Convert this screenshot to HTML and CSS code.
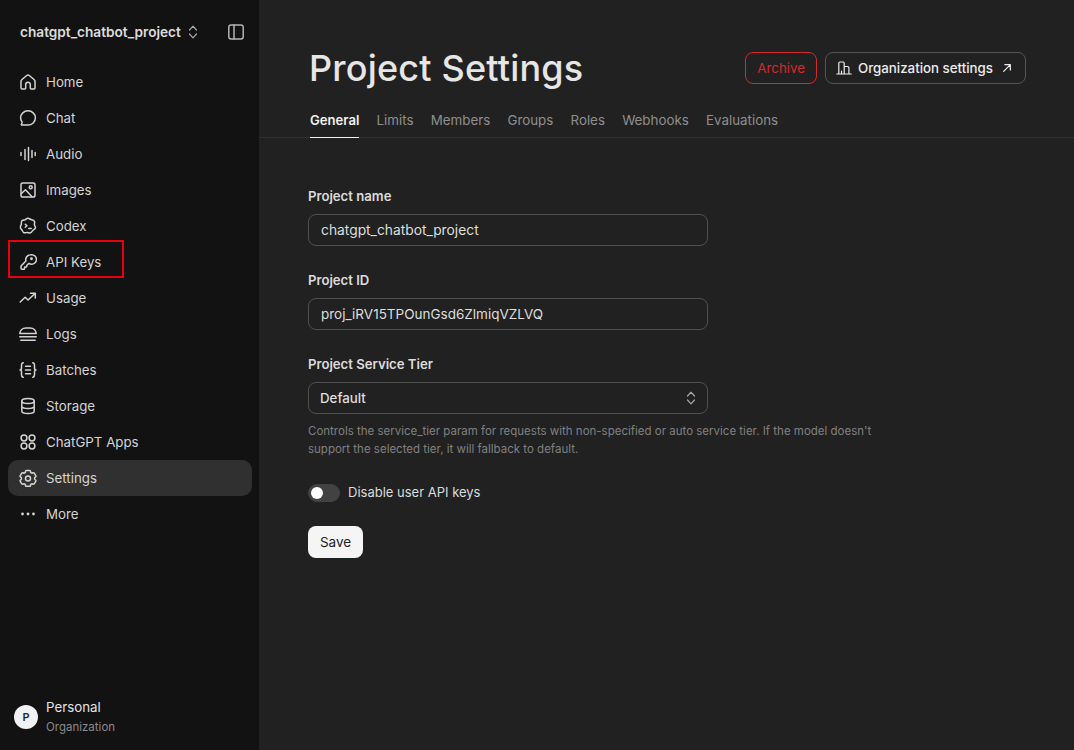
FILE: index.html
```html
<!DOCTYPE html>
<html>
<head>
	<title>Project Settings</title>
	<link rel="stylesheet" href="styles.css">
</head>
<body>
	<div class="app">
		<aside class="sidebar">
			<div class="project-row">
				<span class="project-name">chatgpt_chatbot_project</span>
				<svg class="chevrons" viewBox="0 0 10 16"><path d="M1.5 6 5 2.2 8.500 6M1.500 10 5 13.800 8.500 10"/></svg>
				<svg class="panel-icon" viewBox="0 0 18 18"><rect x="1.800" y="2" width="14.400" height="14" rx="2.200"/><path d="M7 2v14"/></svg>
			</div>
			<nav class="nav">
				<a class="nav-item"><svg viewBox="0 0 18 18"><path d="M3 16c-.6 0-1-.4-1-1V8.200c0-.6.2-1 .7-1.400l5-4.300c.8-.6 1.800-.6 2.600 0l5 4.300c.5.400.7.800.7 1.400V15c0 .6-.4 1-1 1h-2.800c-.5 0-.9-.4-.9-.9v-3.600a2.300 2.300 0 0 0-4.600 0v3.600c0 .5-.4.900-.9.900z"/></svg><span>Home</span></a>
				<a class="nav-item"><svg viewBox="0 0 18 18"><path d="M9 1.800C5 1.800 1.600 4.900 1.600 8.800c0 1.500.5 2.800 1.300 3.900.3.400.3.800.1 1.300l-.7 1.500c-.1.300.1.600.4.600H9c4 0 7.400-3.100 7.400-7.300C16.400 4.900 13 1.800 9 1.800z"/></svg><span>Chat</span></a>
				<a class="nav-item"><svg viewBox="0 0 18 18"><path d="M2 7.500v3M6 4.500v10M9.500 2.500v13M13 5.500v7M16.200 7.500v3"/></svg><span>Audio</span></a>
				<a class="nav-item"><svg viewBox="0 0 18 18"><rect x="2" y="2" width="14" height="14" rx="1.800"/><circle cx="11.700" cy="6.300" r="1.500"/><path d="M2.400 12.500 6.500 8.700l6.500 7"/></svg><span>Images</span></a>
				<a class="nav-item"><svg viewBox="0 0 18 18"><path d="M9 1.300c1.300 0 2 1 3.100 1.300 1.400.3 2.900.4 3.400 1.800.4 1.100-.2 2.100-.1 3.200.2 1.100 1.300 1.800 1 3.200-.3 1.300-1.600 1.600-2.400 2.400-.8.800-1.300 2.100-2.600 2.600-1.100.4-2-.4-3.100-.4-1.200 0-2.300.8-3.400.3-1.200-.5-1.300-1.900-2-2.800C2.100 12.200 1 11.600 1.400 9.700c.2-1.100 1-1.700 1-2.900 0-1.200-.3-2.200.5-3.100.9-.9 2.200-.6 3.300-1C7.200 2.100 7.800 1.300 9 1.300z"/><path d="m6.300 7.300 1.600 1.500-1.600 1.500M9.800 11.500h2.400"/></svg><span>Codex</span></a>
				<a class="nav-item marked"><svg viewBox="0 0 18 18"><path d="M11.500 1.800a4.800 4.800 0 0 0-4.600 6.100L2.500 12.400c-.3.300-.5.600-.5 1v1.800c0 .6.400 1 1 1h1.800c.5 0 .8-.4.800-.8v-1.300h1.300c.5 0 .9-.4.900-.9v-1l2.100-1.800A4.800 4.800 0 1 0 11.500 1.800z"/><circle cx="12.500" cy="5.700" r=".7"/></svg><span>API Keys</span></a>
				<a class="nav-item"><svg viewBox="0 0 18 18"><path d="m1.200 13 4.900-4.700 3 2.700L16 4.500M11.500 4.200h4.800V9"/></svg><span>Usage</span></a>
				<a class="nav-item"><svg viewBox="0 0 18 18"><path d="M.8 8.600C1 5.300 3.500 3 7 3h4c3.500 0 6 2.300 6.200 5.600zM.8 11.800h16.400M1.800 15.200h14.400"/></svg><span>Logs</span></a>
				<a class="nav-item"><svg viewBox="0 0 18 18"><path d="M4.300 1.800C2.500 1.800 2.500 3.200 2.500 4.800v2.300c0 1.200-.5 1.900-1.500 1.900 1 0 1.500.7 1.500 1.900v2.300c0 1.600 0 3 1.800 3M13.700 1.800c1.800 0 1.800 1.400 1.800 3v2.300c0 1.200.5 1.900 1.500 1.900-1 0-1.500.7-1.500 1.900v2.300c0 1.600 0 3-1.800 3M6.500 5.300h5M6.500 9h5M6.500 12.700h5"/></svg><span>Batches</span></a>
				<a class="nav-item"><svg viewBox="0 0 18 18"><ellipse cx="9" cy="4" rx="6.200" ry="2.500"/><path d="M2.800 4v10c0 1.400 2.800 2.500 6.200 2.500s6.200-1.100 6.200-2.500V4M2.800 9c0 1.400 2.800 2.500 6.200 2.500s6.200-1.100 6.200-2.500"/></svg><span>Storage</span></a>
				<a class="nav-item"><svg viewBox="0 0 18 18"><circle cx="5" cy="5" r="2.900"/><circle cx="13" cy="5" r="2.900"/><circle cx="5" cy="13" r="2.900"/><circle cx="13" cy="13" r="2.900"/></svg><span>ChatGPT Apps</span></a>
				<a class="nav-item active"><svg viewBox="0 0 18 18"><path d="M7.500 1.600h3c.5 0 .9.300 1 .8l.2 1.100 1.300.7 1-.4c.5-.2 1-.1 1.300.4l1.400 2.400c.3.500.2 1-.2 1.300l-.9.800v1.500l.9.800c.4.300.5.800.2 1.300l-1.400 2.400c-.3.500-.8.600-1.300.4l-1-.4-1.300.7-.2 1.100c-.1.500-.5.800-1 .8h-3c-.5 0-.9-.3-1-.8l-.2-1.100-1.300-.7-1 .4c-.5.200-1 .100-1.300-.4L1.300 12.400c-.3-.5-.2-1 .2-1.300l.9-.8V8.700l-.9-.8c-.4-.3-.5-.8-.2-1.300l1.400-2.400c.3-.5.800-.6 1.300-.4l1 .4 1.300-.7.200-1.100c.1-.5.500-.8 1-.8z"/><circle cx="9" cy="9.500" r="2.500"/></svg><span>Settings</span></a>
				<a class="nav-item"><svg viewBox="0 0 18 18" class="dots"><circle cx="3.500" cy="9" r="1.400"/><circle cx="9" cy="9" r="1.400"/><circle cx="14.500" cy="9" r="1.400"/></svg><span>More</span></a>
			</nav>
			<div class="org">
				<span class="avatar">P</span>
				<div>
					<div class="org-name">Personal</div>
					<div class="org-sub">Organization</div>
				</div>
			</div>
		</aside>
		<main class="main">
			<div class="top">
				<div class="title-row">
					<h1>Project Settings</h1>
					<div class="actions">
						<button type="button" class="btn btn-danger">Archive</button>
						<button type="button" class="btn btn-outline">
							<svg class="btn-icon" viewBox="0 0 16 16"><path d="M.8 14h14.400M2.800 14V3.200c0-.7.500-1.200 1.200-1.200h3c.7 0 1.200.5 1.200 1.200V14M8.200 6.500h3.500c.7 0 1.200.5 1.200 1.200V14M5.500 14v-3"/></svg>
							Organization settings
							<svg class="btn-arrow" viewBox="0 0 12 12"><path d="M2 10 10 2M3.500 2H10v6.500"/></svg>
						</button>
					</div>
				</div>
				<div class="tabs">
					<a class="tab current">General</a>
					<a class="tab">Limits</a>
					<a class="tab">Members</a>
					<a class="tab">Groups</a>
					<a class="tab">Roles</a>
					<a class="tab">Webhooks</a>
					<a class="tab">Evaluations</a>
				</div>
			</div>
			<form class="form">
				<div class="field">
					<label>Project name</label>
					<div class="box">chatgpt_chatbot_project</div>
				</div>
				<div class="field">
					<label>Project ID</label>
					<div class="box box-id">proj_iRV15TPOunGsd6ZlmiqVZLVQ</div>
				</div>
				<div class="field">
					<label>Project Service Tier</label>
					<div class="box select">
						<span>Default</span>
						<svg class="chevrons" viewBox="0 0 10 16"><path d="M1.500 6 5 2.200 8.500 6M1.500 10 5 13.800 8.500 10"/></svg>
					</div>
					<p class="help">Controls the service_tier param for requests with non-specified or auto service tier. If the model doesn't support the selected tier, it will fallback to default.</p>
				</div>
				<div class="switch-row">
					<span class="switch"><span class="knob"></span></span>
					<span class="switch-text">Disable user API keys</span>
				</div>
				<button type="button" class="save">Save</button>
			</form>
		</main>
	</div>
</body>
</html>
```

FILE: styles.css
```css
*, *::after{
	box-sizing: border-box;
}
html, body{
	height: 100%;
}
body{
	margin: 0;
	background: #212121;
	color: #e3e3e3;
	font-family: Inter, "Liberation Sans", sans-serif;
	font-size: 13.3px;
	overflow: hidden;
}
svg{
	fill: none;
	stroke: currentColor;
	stroke-width: 1.5;
	stroke-linecap: round;
	stroke-linejoin: round;
}
.app{
	display: flex;
	height: 750px;
}

/* sidebar */
.sidebar{
	width: 259px;
	flex: none;
	background: #121212;
	display: flex;
	flex-direction: column;
	padding: 0 7px 13px 8px;
}
.project-row{
	display: flex;
	align-items: center;
	height: 64px;
	padding-left: 12px;
	color: #dcdcdc;
}
.project-name{
	font-size: 13.65px;
	font-weight: 600;
}
.chevrons{
	width: 10px;
	height: 16px;
	margin-left: 7px;
	color: #a8a8a8;
	stroke-width: 1.2;
}
.panel-icon{
	width: 18px;
	height: 18px;
	margin-left: auto;
	margin-right: 7px;
	color: #b4b4b4;
}
.nav{
	display: flex;
	flex-direction: column;
	flex: 1;
}
.nav-item{
	position: relative;
	display: flex;
	align-items: center;
	gap: 9px;
	height: 36px;
	padding-left: 11px;
	border-radius: 10px;
	color: #d4d4d4;
}
.nav-item span{
	margin-top: -1px;
}
.nav-item svg{
	width: 18px;
	height: 18px;
	flex: none;
}
.nav-item .dots{
	fill: currentColor;
	stroke: none;
}
.nav-item.active{
	background: #303030;
}
/* red box drawn on top of the screenshot */
.nav-item.marked::after{
	content: "";
	position: absolute;
	left: 0;
	top: -4px;
	width: 116px;
	height: 38px;
	border: 2px solid #e8000b;
}
.org{
	display: flex;
	align-items: center;
	gap: 8px;
	padding-left: 6px;
}
.avatar{
	width: 24px;
	height: 24px;
	border-radius: 50%;
	background: #f2f2f2;
	color: #1a2a4a;
	font-size: 11px;
	font-weight: 600;
	display: flex;
	align-items: center;
	justify-content: center;
}
.org-name{
	font-size: 13.3px;
	line-height: 20px;
	color: #e3e3e3;
}
.org-sub{
	font-size: 11.5px;
	line-height: 20px;
	color: #8a8a8a;
}

/* main */
.main{
	flex: 1;
}
.top{
	border-bottom: 1px solid #303030;
	padding: 0 48px 0 49px;
	height: 138px;
}
.title-row{
	display: flex;
	justify-content: space-between;
	align-items: center;
	padding-top: 44px;
	height: 92px;
}
h1{
	margin: 0 0 0 1px;
	font-size: 36px;
	font-weight: 500;
	letter-spacing: .2px;
	color: #e6e6e6;
}
.actions{
	display: flex;
	gap: 8px;
}
.btn{
	height: 32px;
	border-radius: 8px;
	background: transparent;
	font-family: inherit;
	font-size: 13.3px;
	display: flex;
	align-items: center;
}
.btn-danger{
	border: 1px solid #d42a2a;
	color: #d42a2a;
	padding: 0 11px;
}
.btn-outline{
	border: 1px solid #555;
	color: #ececec;
	font-weight: 500;
	padding: 0 13px 0 10px;
	gap: 6px;
}
.btn-icon{
	width: 16px;
	height: 16px;
	stroke-width: 1.2;
}
.btn-arrow{
	width: 10px;
	height: 10px;
	margin-left: 3px;
}
.tabs{
	display: flex;
	gap: 17.2px;
	margin-top: 10px;
	padding-left: 2px;
	font-size: 13.35px;
}
.tab{
	height: 36px;
	padding-top: 10px;
	color: #8f8f8f;
}
.tab.current{
	color: #f2f2f2;
	font-weight: 600;
	font-size: 13.1px;
	border-bottom: 1px solid #f2f2f2;
}

/* form */
.form{
	padding: 48px 48px 0 49px;
}
.field{
	margin-bottom: 24px;
}
label{
	display: block;
	font-weight: 600;
	font-size: 13.15px;
	line-height: 20px;
	margin-bottom: 8px;
	color: #dcdcdc;
}
.box{
	width: 400px;
	height: 32px;
	border: 1px solid #505050;
	border-radius: 8px;
	padding: 0 12px;
	display: flex;
	align-items: center;
	font-size: 13.8px;
	color: #dedede;
}
.box-id{
	font-size: 13.5px;
}
.select{
	justify-content: space-between;
	padding: 0 11px 1px;
	font-size: 13.3px;
	font-weight: 500;
}
.select .chevrons{
	margin: 0;
}
.help{
	margin: 8px 0 0;
	width: 580px;
	font-size: 11.5px;
	line-height: 18px;
	color: #808080;
}
.switch-row{
	display: flex;
	align-items: center;
	gap: 8px;
	height: 18px;
	margin-top: 26px;
	font-size: 13px;
	color: #dcdcdc;
}
.switch-text{
	margin-top: -2px;
}
.switch{
	width: 32px;
	height: 18px;
	border-radius: 9px;
	background: #424242;
	padding: 3px;
}
.knob{
	display: block;
	width: 12px;
	height: 12px;
	border-radius: 50%;
	background: #fff;
}
.save{
	display: block;
	margin-top: 24px;
	width: 55px;
	height: 32px;
	border: 0;
	border-radius: 8px;
	background: #f5f5f5;
	color: #222;
	font-family: inherit;
	font-size: 13.5px;
}
```
